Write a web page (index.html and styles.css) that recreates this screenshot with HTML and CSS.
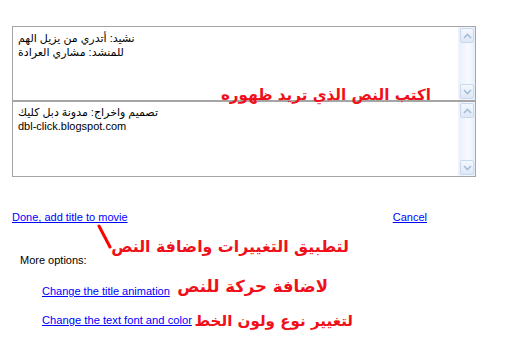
FILE: index.html
```html
<!DOCTYPE html>
<html lang="en">
<head>
<meta charset="utf-8">
<title>Title text</title>
<link rel="stylesheet" href="styles.css">
</head>
<body>
<div class="page">
  <div class="box box-top">
    <div class="box-text">نشيد: أتدري من يزيل الهم<br>للمنشد: مشاري العرادة</div>
    <div class="scroll"><span class="sbtn up"><svg width="9" height="6" viewBox="0 0 9 6"><path d="M1 5 L4.5 1.5 L8 5" fill="none" stroke="#a9bcd6" stroke-width="1.6"/></svg></span><span class="track"></span><span class="sbtn down"><svg width="9" height="6" viewBox="0 0 9 6"><path d="M1 1 L4.5 4.5 L8 1" fill="none" stroke="#a9bcd6" stroke-width="1.6"/></svg></span></div>
  </div>
  <div class="box box-bottom">
    <div class="box-text">تصميم واخراج: مدونة دبل كليك<br>dbl-click.blogspot.com</div>
    <div class="scroll"><span class="sbtn up"><svg width="9" height="6" viewBox="0 0 9 6"><path d="M1 5 L4.5 1.5 L8 5" fill="none" stroke="#a9bcd6" stroke-width="1.6"/></svg></span><span class="track"></span><span class="sbtn down"><svg width="9" height="6" viewBox="0 0 9 6"><path d="M1 1 L4.5 4.5 L8 1" fill="none" stroke="#a9bcd6" stroke-width="1.6"/></svg></span></div>
  </div>

  <div class="actions">
    <a href="#" class="link">Done, add title to movie</a>
    <a href="#" class="link">Cancel</a>
  </div>
  <div class="more">More options:</div>
  <ul class="options">
    <li><a href="#" class="link">Change the title animation</a></li>
    <li><a href="#" class="link">Change the text font and color</a></li>
  </ul>
</div>

<div class="note note-write" dir="rtl">اكتب النص الذي تريد ظهوره</div>
<svg class="pointer" width="20" height="30" viewBox="0 0 20 30"><path d="M3 2 L14 23" stroke="#f00" stroke-width="3" stroke-linecap="round"/></svg>
<div class="note note-apply" dir="rtl">لتطبيق التغييرات واضافة النص</div>
<div class="note note-anim" dir="rtl">لاضافة حركة للنص</div>
<div class="note note-font" dir="rtl">لتغيير نوع ولون الخط</div>
</body>
</html>
```

FILE: styles.css
```css
html, body {
  margin: 0;
  padding: 0;
  background: #fff;
}
body {
  font-family: "Liberation Sans", "DejaVu Sans", sans-serif;
  font-size: 11px;
  color: #000;
  width: 510px;
  height: 349px;
  position: relative;
  overflow: hidden;
}
.page {
  padding: 26px 34px 0 12px;
}
.box {
  display: flex;
  border: 1px solid #a5a5a5;
  background: #fff;
  box-sizing: border-box;
}
.box-top { height: 75px; }
.box-bottom { height: 76px; }
.box-text {
  flex: 1;
  padding: 4px 5px;
  font-family: "Liberation Sans", "DejaVu Sans", sans-serif;
  font-size: 11px;
  line-height: 14px;
}
.box-bottom .box-text { padding-top: 3px; }
.scroll {
  width: 16px;
  display: flex;
  flex-direction: column;
  padding: 1px 0;
  background: linear-gradient(to right, #e9f1fc, #f7faff 60%, #e6eefa);
  border-left: 1px solid #f0f4fa;
}
.sbtn {
  height: 15px;
  margin: 0 1px;
  border: 1px solid #c9d8ec;
  border-radius: 2px;
  background: linear-gradient(to bottom, #f4f8fe, #dde8f7);
  display: flex;
  align-items: center;
  justify-content: center;
  box-sizing: border-box;
}
.sbtn svg { display: block; }
.track { flex: 1; }
.actions {
  display: flex;
  justify-content: space-between;
  margin-top: 34px;
  padding-right: 49px;
}
.link {
  color: #0000ff;
  text-decoration: underline;
  font-family: "Liberation Sans", sans-serif;
  font-size: 11px;
  line-height: 13px;
}
.options li:last-child .link { font-size: 11.2px; }
.more {
  margin: 30px 0 0 8px;
  font-size: 11px;
  line-height: 13px;
}
.options {
  list-style: none;
  margin: 18px 0 0 30px;
  padding: 0;
  display: flex;
  flex-direction: column;
  gap: 16px;
}
.options li { line-height: 13px; }
.note {
  position: absolute;
  color: #f0101a;
  font-family: "DejaVu Sans", sans-serif;
  font-weight: bold;
  white-space: nowrap;
  line-height: 1;
}
.note-write { right: 79px; top: 88px; font-size: 15.2px; }
.note-apply { right: 161px; top: 239px; font-size: 15.8px; }
.note-anim { right: 182px; top: 279px; font-size: 16.5px; }
.note-font { right: 157px; top: 314px; font-size: 15.1px; }
.pointer { position: absolute; left: 96px; top: 224px; }
```
